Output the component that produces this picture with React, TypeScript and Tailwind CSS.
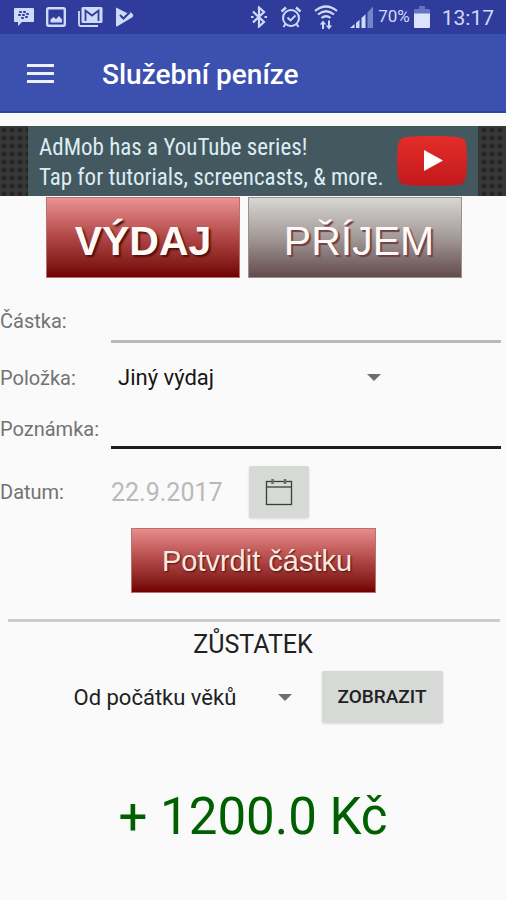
import React, { useState } from 'react';

function MessageIcon() {
  return (
    <svg width="20" height="18" viewBox="0 0 20 18" aria-hidden="true">
      <path d="M1 0h18a1 1 0 0 1 1 1v12a1 1 0 0 1-1 1H8l-4 4v-4H1a1 1 0 0 1-1-1V1a1 1 0 0 1 1-1z" fill="#cfdaf8" />
      <g fill="#2f3c9c">
        <rect x="5" y="3" width="3" height="2" rx="1" />
        <rect x="9" y="3" width="3" height="2" rx="1" />
        <rect x="4" y="6" width="3" height="2" rx="1" />
        <rect x="8" y="6" width="3" height="2" rx="1" />
        <rect x="12" y="5" width="3" height="2" rx="1" />
        <rect x="7" y="9" width="3" height="2" rx="1" />
        <rect x="11" y="8" width="3" height="2" rx="1" />
      </g>
    </svg>
  );
}

function ImageIcon() {
  return (
    <svg width="20" height="20" viewBox="0 0 20 20" aria-hidden="true">
      <rect x="1.2" y="1.2" width="17.6" height="17.6" rx="1.5" fill="none" stroke="#cfdaf8" strokeWidth="2.4" />
      <path d="M4.5 15.500v-3L7.500 10l2.500 2 3-3 3 3.500v3z" fill="#cfdaf8" />
    </svg>
  );
}

function MailStackIcon() {
  return (
    <svg width="25" height="20" viewBox="0 0 25 20" aria-hidden="true">
      <path d="M1 4v13.5a1.5 1.5 0 0 0 1.5 1.5H20" fill="none" stroke="#cfdaf8" strokeWidth="1.8" />
      <rect x="3.5" y="0" width="21" height="16" rx="1.5" fill="#cfdaf8" />
      <path d="M7.500 14V3.500l6.500 5L20.500 3.500V14" fill="none" stroke="#2f3c9c" strokeWidth="1.800" />
    </svg>
  );
}

function PlayCheckIcon() {
  return (
    <svg width="19" height="20" viewBox="0 0 19 20" aria-hidden="true">
      <path d="M1 0.500L12 6l3-1.500 3 3q1 1.500-1 3L2 19.500q-1 .3-1-1z" fill="#cfdaf8" />
      <path d="M5 8l3.500 3.500L15 5" fill="none" stroke="#2f3c9c" strokeWidth="2" />
    </svg>
  );
}

function BluetoothIcon() {
  return (
    <svg width="18" height="22" viewBox="0 0 18 22" fill="none" stroke="#cfdaf8" strokeWidth="2.200" aria-hidden="true">
      <path d="M3 5.500l11 10.500-5 4.500V1.500l5 4.500L3 16.500" />
      <path d="M1 11h2.500M14.500 11H17" />
    </svg>
  );
}

function AlarmIcon() {
  return (
    <svg width="22" height="22" viewBox="0 0 22 22" fill="none" stroke="#cfdaf8" strokeWidth="2" aria-hidden="true">
      <circle cx="11" cy="12" r="8" />
      <path d="M7.500 11.500l3 3 5-5" strokeWidth="1.800" />
      <path d="M1.500 5.500L6 1.500M20.500 5.500L16 1.500" strokeWidth="2.400" />
      <path d="M5.500 18l-2 3M16.500 18l2 3" />
    </svg>
  );
}

function WifiIcon() {
  return (
    <svg width="24" height="25" viewBox="0 0 24 25" fill="none" stroke="#cfdaf8" aria-hidden="true">
      <path d="M1 6Q12-3 23 6M4 9.500q8-6.500 16 0M7.500 13q4.500-3.500 9 0" strokeWidth="2.200" />
      <path d="M9 24v-7M15 15.500v7" strokeWidth="2" />
      <path d="M5.800 19.500L9 15.500l3.200 4zM11.800 20.500L15 24.500l3.200-4z" fill="#cfdaf8" stroke="none" />
    </svg>
  );
}

function SignalIcon() {
  return (
    <svg width="23" height="22" viewBox="0 0 23 22" aria-hidden="true">
      <path d="M0 22l4.500-4v4zM6 17l3.500-3.200V22H6zM11.500 12l4-3.700V22h-4z" fill="#cfdaf8" />
      <path d="M17.500 6.500L23 0.500V22h-5.500z" fill="#7583c9" />
    </svg>
  );
}

function BatteryIcon() {
  return (
    <svg width="16" height="22" viewBox="0 0 16 22" aria-hidden="true">
      <path d="M5 0h6v3h4a1 1 0 0 1 1 1v4H0V4a1 1 0 0 1 1-1h4z" fill="#6673be" />
      <path d="M0 7.500h16V21a1 1 0 0 1-1 1H1a1 1 0 0 1-1-1z" fill="#dbe4fb" />
    </svg>
  );
}

function CalendarIcon() {
  return (
    <svg width="28" height="28" viewBox="0 0 28 28" fill="none" stroke="#3c3e3c" aria-hidden="true">
      <rect x="1.500" y="3.500" width="25" height="23" strokeWidth="1.300" />
      <path d="M1.500 9h25" strokeWidth="1.300" />
      <path d="M7.500 1v5M20 1v5" strokeWidth="2.400" stroke="#666966" />
    </svg>
  );
}

function Caret() {
  return (
    <svg className="pointer-events-none shrink-0" width="14" height="7" viewBox="0 0 14 7" aria-hidden="true">
      <path d="M0 0h14L7 7z" fill="#6e6e6e" />
    </svg>
  );
}

function StatusBar() {
  return (
    <div className="flex h-[34px] items-center justify-between bg-[#2f3c9c] pl-3.5 pr-3 text-[#cfdaf8]">
      <div className="flex items-center gap-3">
        <MessageIcon />
        <ImageIcon />
        <MailStackIcon />
        <PlayCheckIcon />
      </div>
      <div className="flex items-center">
        <div className="mr-[5px] flex items-center gap-3">
          <BluetoothIcon />
          <AlarmIcon />
          <WifiIcon />
          <SignalIcon />
        </div>
        <span className="mr-1 text-[17px]">70%</span>
        <BatteryIcon />
        <span className="ml-3 pt-1 text-[21px]">13:17</span>
      </div>
    </div>
  );
}

function AdBanner() {
  return (
    <a
      href="#"
      className="mt-[13px] flex h-[70px] justify-center bg-[#383838] bg-[radial-gradient(circle,#262626_2px,transparent_3px)] bg-[length:8px_8px]"
    >
      <span className="mx-7 flex min-w-0 flex-1 items-center justify-between bg-[#44595f] px-[11px]">
        <span className="whitespace-nowrap pt-1 font-['Roboto_Condensed','Liberation_Sans_Narrow',sans-serif] text-[23px] leading-[30px] text-[#dcecf4]">
          AdMob has a YouTube series!
          <br />
          Tap for tutorials, screencasts, &amp; more.
        </span>
        <svg className="shrink-0" width="70" height="50" viewBox="0 0 70 50" aria-hidden="true">
          <defs>
            <linearGradient id="play" x1="0" y1="0" x2="0" y2="1">
              <stop offset="0" stopColor="#e52d29" />
              <stop offset="1" stopColor="#c2191c" />
            </linearGradient>
          </defs>
          <path d="M9 1Q35-1 61 1q8 1 8 8 2 16 0 32-1 7-8 8-26 2-52 0-7-1-8-8-2-16 0-32 1-7 8-8z" fill="url(#play)" />
          <path d="M27 14l19 10.500L27 35z" fill="#fff" />
        </svg>
      </span>
    </a>
  );
}

export default function App() {
  const [amount, setAmount] = useState('');
  const [note, setNote] = useState('');

  return (
    <div className="min-h-screen bg-[#fafafa] font-[Roboto,sans-serif] text-[#212121]">
      <StatusBar />
      <header className="flex h-[79px] items-center border-b-2 border-[#2549a0] bg-[#3c50b0] pt-0.5 pl-[27px]">
        <button type="button" aria-label="Menu" className="flex flex-col gap-[5px]">
          <span className="h-[3px] w-[27px] bg-[#eef1fc]" />
          <span className="h-[3px] w-[27px] bg-[#eef1fc]" />
          <span className="h-[3px] w-[27px] bg-[#eef1fc]" />
        </button>
        <h1 className="ml-12 pt-0.5 text-[28px] font-medium text-white">Služební peníze</h1>
      </header>

      <AdBanner />

      <main>
        <div className="flex justify-center gap-2 pt-px pl-0.5 text-[41px] text-[#fffaf5]">
          <button
            type="button"
            className="h-[81px] w-[194px] border border-[#b87070] bg-linear-to-b from-[#ea9292] via-[#b04646] to-[#700000] pt-2 font-['Liberation_Sans',sans-serif] font-bold [text-shadow:2px_2px_2px_#4a1010]"
          >
            VÝDAJ
          </button>
          <button
            type="button"
            className="h-[81px] w-[214px] border border-[#a08f8f] bg-linear-to-b from-[#d8d6d3] via-[#a39a98] to-[#644c4e] pt-2 pl-2 font-['Liberation_Sans',sans-serif] [text-shadow:2px_2px_1px_#70404a]"
          >
            PŘÍJEM
          </button>
        </div>

        <form className="text-xl text-[#737373]" onSubmit={(e) => e.preventDefault()}>
          <div className="mt-5 flex items-center pr-[5px]">
            <label htmlFor="amount" className="w-[111px]">Částka:</label>
            <input
              id="amount"
              className="h-[45px] min-w-0 flex-1 border-b-3 border-[#bababa] outline-none"
              value={amount}
              onChange={(e) => setAmount(e.target.value)}
            />
          </div>
          <div className="mt-[7px] flex h-14 items-center">
            <label htmlFor="item" className="w-[111px]">Položka:</label>
            <div className="flex w-[270px] items-center">
              <select id="item" className="min-w-0 flex-1 appearance-none pl-[7px] text-[22px] text-[#151515] outline-none">
                <option>Jiný výdaj</option>
              </select>
              <Caret />
            </div>
          </div>
          <div className="flex items-center pr-[5px]">
            <label htmlFor="note" className="w-[111px] pt-0.5">Poznámka:</label>
            <input
              id="note"
              className="h-[43px] min-w-0 flex-1 border-b-3 border-[#1d1f1f] outline-none"
              value={note}
              onChange={(e) => setNote(e.target.value)}
            />
          </div>
          <div className="mt-[17px] flex items-center">
            <label htmlFor="date" className="w-[111px]">Datum:</label>
            <input id="date" className="w-[138px] text-[25px] text-[#b9b9b9] outline-none" defaultValue="22.9.2017" readOnly />
            <button
              type="button"
              aria-label="Datum"
              className="flex h-[52px] w-[60px] items-center justify-center rounded-xs bg-[#d6d9d6] shadow-sm"
            >
              <CalendarIcon />
            </button>
          </div>
          <button
            type="submit"
            className="mx-auto mt-2.5 block h-[65px] w-[245px] border border-[#b87070] bg-linear-to-b from-[#e88c8c] via-[#b04646] to-[#700000] pt-px pl-2 font-['Liberation_Sans',sans-serif] text-[29px] text-[#fbe9df] [text-shadow:1px_1px_2px_#4a1010]"
          >
            Potvrdit částku
          </button>
        </form>

        <hr className="mt-[26px] mr-1.5 ml-2 border-t-3 border-[#cccccc]" />

        <section>
          <h2 className="mt-[7px] text-center text-[25px] leading-8">ZŮSTATEK</h2>
          <div className="mt-[10px] flex items-center justify-center pl-2.5">
            <select aria-label="Období" className="w-[204px] appearance-none text-[22px] text-[#212121] outline-none">
              <option>Od počátku věků</option>
            </select>
            <Caret />
            <button
              type="button"
              className="ml-[30px] h-[52px] w-[121px] rounded-xs bg-[#d6d9d6] text-[19px] font-medium shadow-sm"
            >
              ZOBRAZIT
            </button>
          </div>
          <p className="mt-[62px] text-center text-[51px] leading-[64px] text-[#006000]">+ 1200.0 Kč</p>
        </section>
      </main>
    </div>
  );
}
